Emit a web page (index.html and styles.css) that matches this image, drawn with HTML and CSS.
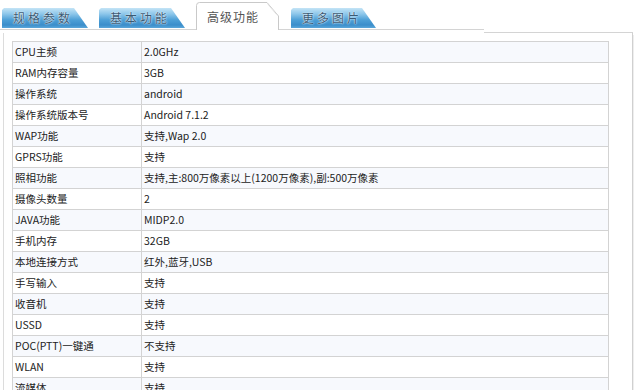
FILE: index.html
```html
<!DOCTYPE html>
<html lang="zh">
<head>
<meta charset="utf-8">
<link rel="stylesheet" href="styles.css">
</head>
<body>
<div class="tabs">
  <div class="tab blue t1"><span>规格参数</span></div>
  <div class="tab blue t2"><span>基本功能</span></div>
  <div class="tab active">
    <svg class="active-bg" width="84" height="28" viewBox="0 0 84 28">
      <path d="M0.5,28 V3.5 Q0.5,0.5 3.5,0.5 H71 L82.5,14 V28" fill="#fff" stroke="#c9c9c9"/>
      <path d="M72,2.5 L80.5,12.5" fill="none" stroke="#e6e6e6"/>
    </svg>
    <span>高级功能</span>
  </div>
  <div class="tab blue t4"><span>更多图片</span></div>
</div>
<div class="panel">
  <div class="panel-top"><div class="gap"></div><div class="edge"></div></div>
  <table class="spec">
    <tr><td class="k">CPU主频</td><td>2.0GHz</td></tr>
    <tr><td class="k">RAM内存容量</td><td>3GB</td></tr>
    <tr><td class="k">操作系统</td><td>android</td></tr>
    <tr><td class="k">操作系统版本号</td><td>Android 7.1.2</td></tr>
    <tr><td class="k">WAP功能</td><td>支持,Wap 2.0</td></tr>
    <tr><td class="k">GPRS功能</td><td>支持</td></tr>
    <tr><td class="k">照相功能</td><td>支持,主:800万像素以上(1200万像素),副:500万像素</td></tr>
    <tr><td class="k">摄像头数量</td><td>2</td></tr>
    <tr><td class="k">JAVA功能</td><td>MIDP2.0</td></tr>
    <tr><td class="k">手机内存</td><td>32GB</td></tr>
    <tr><td class="k">本地连接方式</td><td>红外,蓝牙,USB</td></tr>
    <tr><td class="k">手写输入</td><td>支持</td></tr>
    <tr><td class="k">收音机</td><td>支持</td></tr>
    <tr><td class="k">USSD</td><td>支持</td></tr>
    <tr><td class="k">POC(PTT)一键通</td><td>不支持</td></tr>
    <tr><td class="k">WLAN</td><td>支持</td></tr>
    <tr><td class="k">流媒体</td><td>支持</td></tr>
  </table>
</div>
</body>
</html>
```
FILE: styles.css
```css
html, body {
  margin: 0;
  padding: 0;
  background: #fff;
  overflow: hidden;
}
body {
  width: 640px;
  height: 390px;
  font-family: "Noto Sans CJK SC", sans-serif;
  color: #222;
}
.tabs {
  display: flex;
  align-items: flex-end;
  width: 482px;
  height: 29px;
  padding-left: 2px;
  border-bottom: 1px solid #d4d4d4;
}
.tab {
  flex: none;
  position: relative;
}
.blue {
  height: 20px;
  background: linear-gradient(#c4e4f6 0%, #8cc6ea 30%, #4d9fd6 60%, #3b8ecb 85%, #5aa6d9 100%);
  clip-path: polygon(0 2px, 2px 0, calc(100% - 14px) 0, 100% 100%, 0 100%);
  font-size: 12px;
  line-height: 20px;
  letter-spacing: 3px;
  color: #3a5a74;
  text-shadow: 0 0 2px #e8f6ff, 0 0 1px #fff;
  margin-bottom: 1px;
}
.blue span {
  display: block;
  padding-left: 11px;
}
.t1 { width: 86px; margin-right: 11px; }
.t2 { width: 86px; margin-right: 11px; }
.t4 { width: 85px; }
.active {
  width: 84px;
  height: 28px;
  margin-right: 11px;
  margin-bottom: -1px;
  font-size: 12px;
  letter-spacing: 1px;
  color: #555;
}
.active-bg {
  position: absolute;
  left: 0;
  top: 0;
  display: block;
}
.active span {
  position: relative;
  display: block;
  padding: 7px 0 0 11px;
  line-height: 15px;
}
.panel {
  margin: 3px 0 0 3px;
  width: 630px;
  height: 360px;
  border-left: 1px solid #dcdcdc;
  border-right: 1px solid #d0d0d0;
  box-shadow: 3px 0 0 -2px #eee;
  padding-left: 8px;
  box-sizing: border-box;
}
.panel-top {
  display: flex;
  height: 8px;
  margin-left: -9px;
  margin-right: -1px;
}
.panel-top .gap { width: 481px; }
.panel-top .edge {
  flex: 1;
  border-top: 1px solid #d4d4d4;
  margin-top: -1px;
}
.spec {
  border-collapse: collapse;
  width: 597px;
  font-size: 10.5px;
  color: #222;
}
.spec td {
  border: 1px solid #d3d3d3;
  height: 20px;
  padding: 0 0 0 2px;
  line-height: 20px;
  white-space: nowrap;
  box-sizing: border-box;
}
.spec td.k { width: 129px; }
.spec tr:nth-child(odd) td { background: #f7f9fd; }
```
